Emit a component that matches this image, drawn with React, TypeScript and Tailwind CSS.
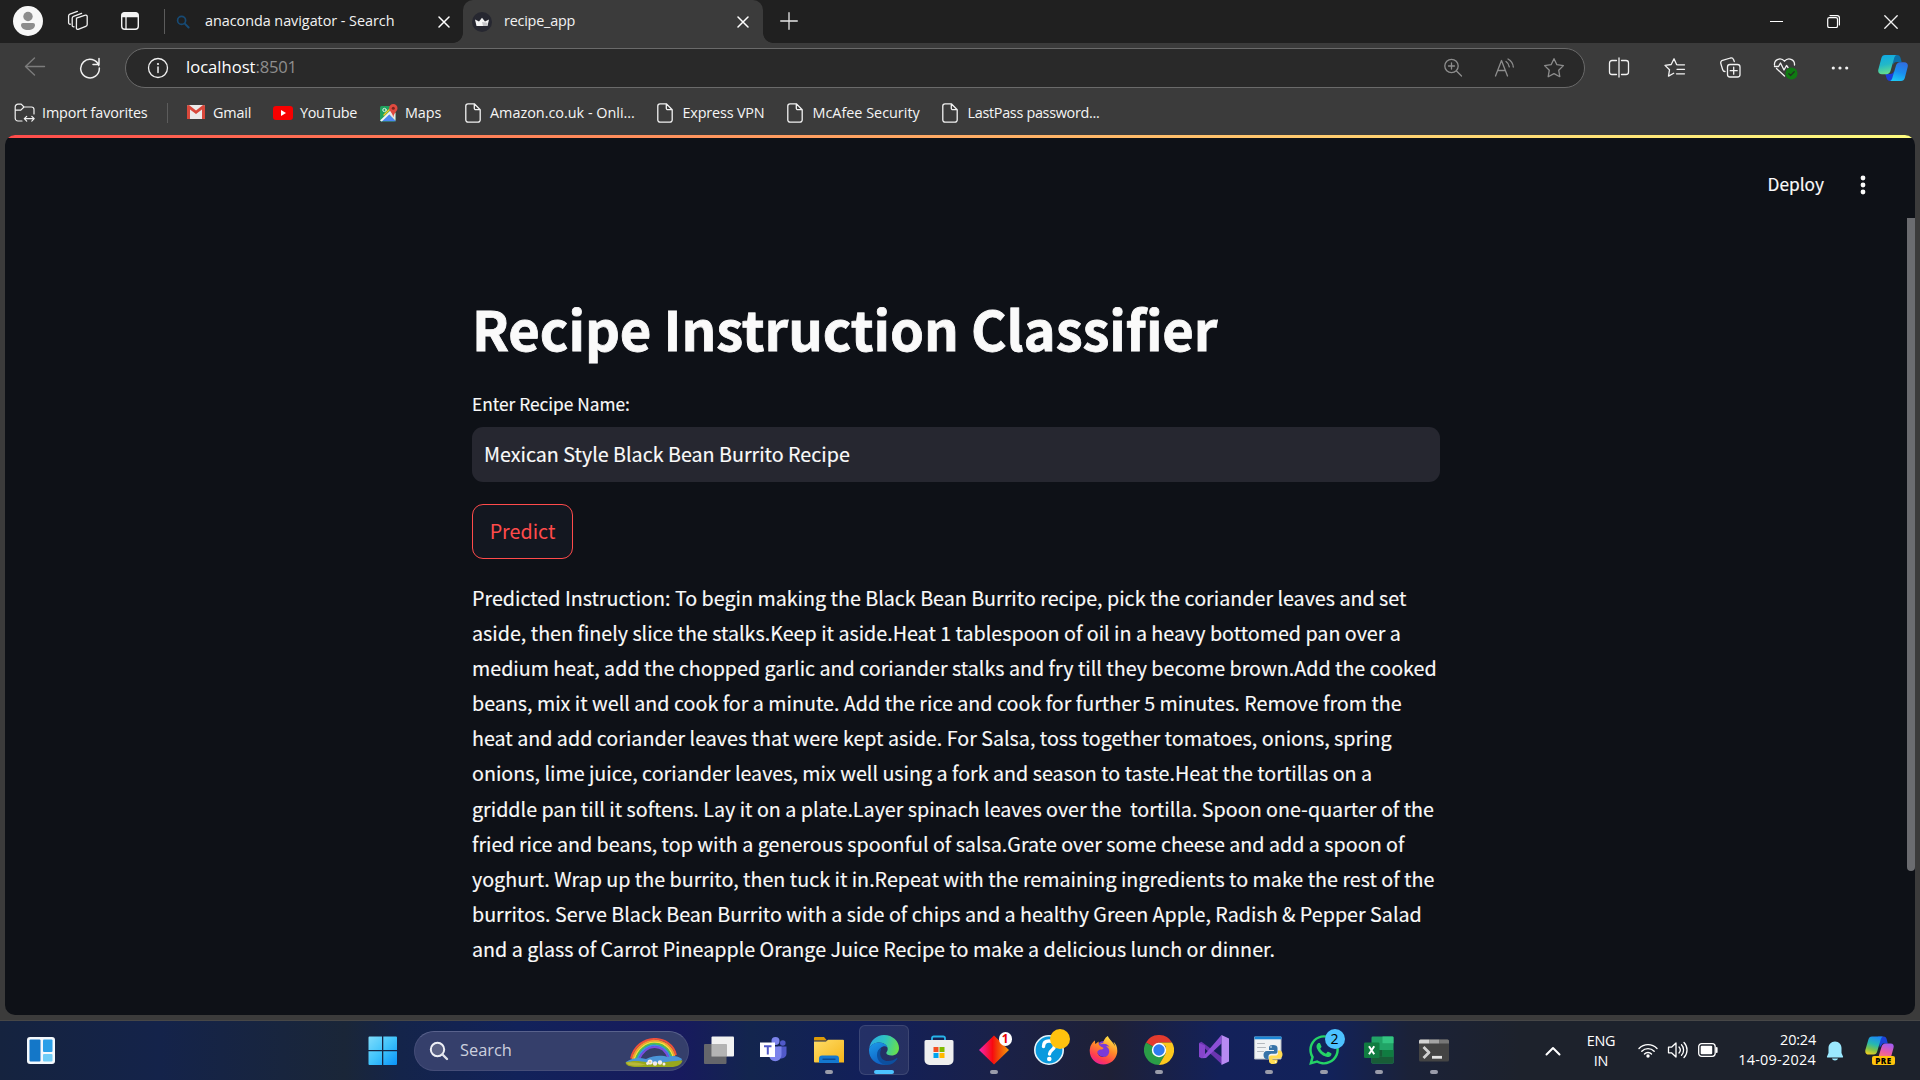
import React from "react";
import { FaWhatsapp, FaFirefoxBrowser } from "react-icons/fa";

const sans = "font-['Noto_Sans_CJK_SC',sans-serif]";
const ui = "font-['Open_Sans',sans-serif]";

type SvgProps = { w: number; h: number; className?: string; children: React.ReactNode };

function Svg({ w, h, className = "", children }: SvgProps) {
  return (
    <svg
      width={w}
      height={h}
      viewBox={`0 0 ${w} ${h}`}
      fill="none"
      strokeLinecap="round"
      strokeLinejoin="round"
      className={"block shrink-0 " + className}
    >
      {children}
    </svg>
  );
}

/* ---------- Tab strip ---------- */

function TabClose() {
  return (
    <Svg w={12} h={12}>
      <path d="M1 1l10 10M11 1L1 11" stroke="#fff" strokeWidth="1.5" />
    </Svg>
  );
}

function TabStrip() {
  return (
    <div className="flex h-[43px] bg-[#202020]">
      <div className="flex h-[42px] w-[164px] items-center">
        <Svg w={30} h={30} className="ml-[13px]">
          <circle cx="15" cy="15" r="15" fill="#f7f7f7" />
          <circle cx="15" cy="10.5" r="4.7" fill="#8c8c8c" />
          <path d="M8 19a2 2 0 0 1 2-2h10a2 2 0 0 1 2 2c0 3-3 5-7 5s-7-2-7-5z" fill="#8c8c8c" />
        </Svg>
        <Svg w={22} h={22} className="ml-6">
          <g stroke="#f0f0f0" strokeWidth="1.3">
            <path d="M9.5 8.2l8.8-3a1.4 1.4 0 0 1 1.9 1.3v7.9a2 2 0 0 1-1.4 1.9l-7.6 3a1.3 1.3 0 0 1-1.8-1.2z" />
            <path d="M7 16.8a1.4 1.4 0 0 1-1.8-1.3V8.2a2 2 0 0 1 1.3-1.9l8.1-3" />
            <path d="M3.4 14.2A1.4 1.4 0 0 1 1.6 13V6a2 2 0 0 1 1.3-1.9l7.5-2.7" />
          </g>
        </Svg>
        <Svg w={20} h={20} className="ml-[31px]">
          <rect x="1.7" y="1.7" width="16.6" height="16.6" rx="3" stroke="#f4f4f4" strokeWidth="1.4" />
          <path d="M1.7 6.2V4.5a3 3 0 0 1 3-3h10.6a3 3 0 0 1 3 3v1.7z" fill="#f4f4f4" />
          <path d="M6 6v12" stroke="#f4f4f4" strokeWidth="1.3" />
        </Svg>
      </div>
      <div className="mt-[9px] h-[25px] w-px bg-[#5c5c5c]" />
      <div className="flex h-[42px] w-[298px] items-center">
        <Svg w={14} h={14} className="ml-[11px] mt-[2px]">
          <circle cx="5.6" cy="5.4" r="4" stroke="#174a74" strokeWidth="1.7" />
          <path d="M8.8 8.6l3.8 3.9" stroke="#174a74" strokeWidth="2" />
        </Svg>
        <span className={"ml-[15px] w-[233px] whitespace-nowrap text-[14.4px] tracking-[-0.04px] text-[#f2f2f2] " + ui}>
          anaconda navigator - Search
        </span>
        <div className="mt-[1px]"><TabClose /></div>
      </div>
      <div className="relative flex h-[43px] w-[300px] items-center rounded-t-[10px] bg-[#3b3b3b] pb-px">
        <div className="absolute -left-[10px] bottom-0 size-[10px] bg-[radial-gradient(circle_at_0_0,#202020_9.5px,#3b3b3b_10.2px)]" />
        <div className="absolute -right-[10px] bottom-0 size-[10px] bg-[radial-gradient(circle_at_100%_0,#202020_9.5px,#3b3b3b_10.2px)]" />
        <Svg w={20} h={20} className="ml-[9px] mt-[2px]">
          <circle cx="10" cy="10" r="10" fill="#262730" />
          <path d="M3 7.5l4 2 3-3.7 3 3.7 4-2-1.5 6.6h-11z" fill="#f5f5f5" />
          <path d="M10 10l5.6 0.8-.6 3.3h-4z" fill="#c4c4c8" />
        </Svg>
        <span className={"ml-3 w-[233px] whitespace-nowrap text-[14.4px] tracking-[-0.22px] text-[#f2f2f2] " + ui}>
          recipe_app
        </span>
        <div className="mt-[1px]"><TabClose /></div>
      </div>
      <div className="flex h-[42px] items-center">
        <Svg w={18} h={18} className="ml-[17px]">
          <path d="M9 .7v16.6M.7 9h16.6" stroke="#e6e6e6" strokeWidth="1.3" />
        </Svg>
      </div>
      <div className="ml-auto mr-[22px] flex h-[43px] items-center gap-[44px]">
        <Svg w={13} h={13}><path d="M0 6.5h13" stroke="#fff" strokeWidth="1.2" /></Svg>
        <Svg w={13} h={13}>
          <rect x=".7" y="2.7" width="9.8" height="9.8" rx="1.6" stroke="#fff" strokeWidth="1.2" />
          <path d="M3 .6h7.2a2.2 2.2 0 0 1 2.2 2.2V10" stroke="#fff" strokeWidth="1.2" />
        </Svg>
        <Svg w={14} h={14}><path d="M.8.8l12.4 12.4M13.2.8L.8 13.2" stroke="#f2f2f2" strokeWidth="1.3" /></Svg>
      </div>
    </div>
  );
}

/* ---------- Address bar ---------- */

function CopilotIcon() {
  return (
    <Svg w={30} h={28}>
      <defs>
        <linearGradient id="cpA" x1="0" y1="0" x2="0.2" y2="1">
          <stop offset="0" stopColor="#0fa8e6" /><stop offset=".55" stopColor="#22b8c8" /><stop offset="1" stopColor="#62dc8e" />
        </linearGradient>
        <linearGradient id="cpB" x1="0.6" y1="0" x2="0.3" y2="1">
          <stop offset="0" stopColor="#2f6fe0" /><stop offset=".5" stopColor="#1a8df0" /><stop offset="1" stopColor="#1cc8f4" />
        </linearGradient>
      </defs>
      <path d="M13 1h6c2 0 3 1 3.600 3l1 4h-5c-2 0-3 1-3.600 3z" fill="#0b6fa8" />
      <path d="M16 27h-4c-2 0-3-1.200-3.600-3.200L7.300 20h5c2 0 3-1 3.600-3z" fill="#1b3fd8" />
      <path d="M7 1h11.500c-1.500.6-2 2-2.600 4l-3.400 12c-.6 2-2 3.200-4 3.200H4c-3 0-4.400-2-3.600-5L3.400 4C4 2 5 1 7 1z" fill="url(#cpA)" />
      <path d="M23 27H12c1.500-.6 2-2 2.600-4l3.400-11.500c.6-2 2-3.300 4-3.300h4.200c3 0 4.200 2 3.400 5L26.800 24c-.6 2-1.800 3-3.800 3z" fill="url(#cpB)" />
    </Svg>
  );
}

function Toolbar() {
  return (
    <div className="flex h-[50px] items-center bg-[#3b3b3b]">
      <Svg w={22} h={20} className="ml-[24px] -mt-[2px]">
        <path d="M20.500 9.500H1.500M10.500 1L1.500 9.500l9 8.500" stroke="#7c7c7c" strokeWidth="1.4" />
      </Svg>
      <Svg w={22} h={22} className="ml-[33px] -mt-[1px]">
        <path d="M19.800 8.500A9.300 9.300 0 1 0 20.300 11M20 1.500V7.500H14" stroke="#f0f0f0" strokeWidth="1.500" />
      </Svg>
      <div className="ml-[24px] flex h-[40px] w-[1460px] items-center rounded-full border border-[#6a6a6a] bg-[#292929]">
        <Svg w={22} h={22} className="ml-[20.500px]">
          <circle cx="11" cy="11" r="9.500" stroke="#f0f0f0" strokeWidth="1.300" />
          <path d="M11 10v5.500" stroke="#f0f0f0" strokeWidth="1.500" />
          <circle cx="11" cy="7" r="1.100" fill="#f0f0f0" />
        </Svg>
        <span className={"ml-[17.500px] whitespace-nowrap pb-px text-[16.6px] text-white " + ui}>localhost</span>
        <span className={"whitespace-nowrap pb-px text-[16.6px] tracking-[-0.2px] text-[#8e8e8e] " + ui}>:8501</span>
        <Svg w={20} h={20} className="ml-auto">
          <g stroke="#8d8d8d" strokeWidth="1.300">
            <circle cx="8.500" cy="8" r="6.700" /><path d="M13.500 13l5 5M8.500 5v6M5.500 8h6" />
          </g>
        </Svg>
        <Svg w={22} h={20} className="ml-[31px]">
          <g stroke="#8d8d8d" strokeWidth="1.300">
            <path d="M1.500 18L7.500 2.500 13.500 18M3.600 12.500h7.800" />
            <path d="M12 3.500c1.800 1.200 3 3 3.300 5.300M14 1c3.200 1.800 5 4.500 5.300 8" />
          </g>
        </Svg>
        <Svg w={22} h={22} className="ml-[27px] mr-[19px]">
          <path d="M11 1.700l2.900 6 6.500.9-4.700 4.600 1.100 6.500-5.800-3.100-5.800 3.100 1.100-6.500L1.600 8.600l6.500-.9z" stroke="#8d8d8d" strokeWidth="1.300" />
        </Svg>
      </div>
      <Svg w={22} h={22} className="ml-[23px]">
        <g stroke="#f2f2f2" strokeWidth="1.300">
          <path d="M8.500 3.500H4A2.500 2.500 0 0 0 1.500 6v9A2.500 2.500 0 0 0 4 17.500h4.500M13.500 3.500H18A2.500 2.500 0 0 1 20.500 6v9a2.500 2.500 0 0 1-2.500 2.500h-4.500M11 1v19" />
        </g>
      </Svg>
      <Svg w={22} h={22} className="ml-[34px]">
        <g stroke="#f2f2f2" strokeWidth="1.300">
          <path d="M14 7.800l-1.300-.1L10 1.800 7.200 7.500 1 8.400l4.500 4.400-1 6.300 5.200-2.800M14 7.800h6.500M13 12.300h7.500M12.500 16.800h8" />
        </g>
      </Svg>
      <Svg w={24} h={24} className="ml-[32.500px]">
        <g stroke="#f2f2f2" strokeWidth="1.300">
          <rect x="8.500" y="8.500" width="12.500" height="12.500" rx="2.500" />
          <path d="M14.700 11.200v7M11.200 14.700h7M6 15.500a2.500 2.500 0 0 1-2.300-1.800L1.800 7.500A2.500 2.500 0 0 1 3.500 4.400l8-2.400a2.500 2.500 0 0 1 3 1.600l.8 2" />
        </g>
      </Svg>
      <Svg w={26} h={24} className="ml-[30.500px]">
        <g stroke="#f2f2f2" strokeWidth="1.300">
          <path d="M1.500 9C1 3 8 1 11.500 5.200 15 1 22 3 21.500 9M3.500 12.500l8 7.500M1.500 10.500h4l2-3.500 3.500 7 2.500-4.500 1.500 2" />
        </g>
        <circle cx="18.500" cy="17.500" r="6" fill="#0f7a12" />
        <path d="M15.800 17.700l1.800 1.800 3.600-3.800" stroke="#20331f" strokeWidth="1.300" />
      </Svg>
      <Svg w={18} h={6} className="ml-[32px]">
        <circle cx="2.300" cy="3" r="1.600" fill="#f2f2f2" /><circle cx="9" cy="3" r="1.600" fill="#f2f2f2" /><circle cx="15.700" cy="3" r="1.600" fill="#f2f2f2" />
      </Svg>
      <div className="ml-[29px]"><CopilotIcon /></div>
    </div>
  );
}

/* ---------- Bookmarks ---------- */

function Doc() {
  return (
    <Svg w={16} h={20}>
      <path d="M3 .8h6.300l5.900 6V17a2.200 2.200 0 0 1-2.200 2.200H3A2.200 2.200 0 0 1 .8 17V3A2.200 2.200 0 0 1 3 .8zM9.300.8v4.400a1.500 1.500 0 0 0 1.500 1.500h4.400" stroke="#f2f2f2" strokeWidth="1.300" />
    </Svg>
  );
}

const mark = "flex shrink-0 items-center whitespace-nowrap text-[14.4px] text-[#f5f5f5] " + ui;

function Bookmarks() {
  return (
    <div className="flex h-[40px] items-center bg-[#3b3b3b] pl-[14px]">
      <div className={mark + " w-[153px] gap-[6px] tracking-[-0.14px]"}>
        <Svg w={22} h={20}>
          <path d="M8 18H4a2.800 2.800 0 0 1-2.800-2.800V4A2.800 2.800 0 0 1 4 1.200h3.200L10 4h7.500a2.500 2.500 0 0 1 2.500 2.500V11M1.300 7.200h5.500L10 4" stroke="#f2f2f2" strokeWidth="1.200" />
          <path d="M10.500 15.700h9.500M12.700 13.300l-2.400 2.400 2.400 2.400M17.800 13.300l2.400 2.400-2.400 2.400" stroke="#f2f2f2" strokeWidth="1.200" />
        </Svg>
        Import favorites
      </div>
      <div className="h-[20px] w-px bg-[#5c5c5c]" />
      <div className={mark + " ml-[19px] w-[86px] gap-[8px] tracking-[-0.15px]"}>
        <Svg w={18} h={15}>
          <rect x="0" y="0" width="18" height="14" rx="1.500" fill="#eceaea" />
          <path d="M0 14h3V4.500L9 9l6-4.500V14h3V1.500A1.500 1.500 0 0 0 16.500 0H16L9 5.500 2 0h-.5A1.500 1.500 0 0 0 0 1.500z" fill="#d9483b" />
        </Svg>
        Gmail
      </div>
      <div className={mark + " w-[106.500px] gap-[7px] tracking-[-0.3px]"}>
        <Svg w={20} h={14}>
          <rect width="20" height="14" rx="3" fill="#f80000" /><path d="M8 4v6l5-3z" fill="#fff" />
        </Svg>
        YouTube
      </div>
      <div className={mark + " w-[85.500px] gap-[7.500px] tracking-[-0.1px]"}>
        <Svg w={18} h={18}>
          <rect x="0" y="2" width="15.500" height="15.500" rx="1.500" fill="#1fa15d" />
          <path d="M1 17.300L9 10l7 7.300z" fill="#4b87f0" />
          <path d="M0 16.500L14 3l1.500 1.500L1.800 17.500z" fill="#f2f2f2" />
          <path d="M8.800 10l6.700 6.800V9l-2.500-2.500z" fill="#e8e8e8" />
          <path d="M10 5l-6 6" stroke="#fbc91c" strokeWidth="1.500" />
          <path d="M13.300 0a4.200 4.200 0 0 1 4.200 4.200c0 3-3.300 4-4.200 9-.9-5-4.200-6-4.200-9A4.200 4.200 0 0 1 13.300 0z" fill="#e04a3f" />
          <circle cx="13.300" cy="4.200" r="1.500" fill="#7c231f" />
          <circle cx="4.500" cy="6" r="1.700" stroke="#dff3e6" strokeWidth="1" />
        </Svg>
        Maps
      </div>
      <div className={mark + " w-[192px] gap-[9px]"}><Doc />Amazon.co.uk - Onli...</div>
      <div className={mark + " w-[130px] gap-[9.500px] tracking-[-0.17px]"}><Doc />Express VPN</div>
      <div className={mark + " w-[155px] gap-[9.500px]"}><Doc />McAfee Security</div>
      <div className={mark + " gap-[9.500px] tracking-[-0.3px]"}><Doc />LastPass password...</div>
    </div>
  );
}

/* ---------- Streamlit page ---------- */

const instruction = [
  "Predicted Instruction: To begin making the Black Bean Burrito recipe, pick the coriander leaves and set",
  "aside, then finely slice the stalks.Keep it aside.Heat 1 tablespoon of oil in a heavy bottomed pan over a",
  "medium heat, add the chopped garlic and coriander stalks and fry till they become brown.Add the cooked",
  "beans, mix it well and cook for a minute. Add the rice and cook for further 5 minutes. Remove from the",
  "heat and add coriander leaves that were kept aside. For Salsa, toss together tomatoes, onions, spring",
  "onions, lime juice, coriander leaves, mix well using a fork and season to taste.Heat the tortillas on a",
  "griddle pan till it softens. Lay it on a plate.Layer spinach leaves over the  tortilla. Spoon one-quarter of the",
  "fried rice and beans, top with a generous spoonful of salsa.Grate over some cheese and add a spoon of",
  "yoghurt. Wrap up the burrito, then tuck it in.Repeat with the remaining ingredients to make the rest of the",
  "burritos. Serve Black Bean Burrito with a side of chips and a healthy Green Apple, Radish & Pepper Salad",
  "and a glass of Carrot Pineapple Orange Juice Recipe to make a delicious lunch or dinner.",
];

function Page() {
  return (
    <div className={"relative mx-[5px] mt-[2px] h-[880px] overflow-hidden rounded-[10px] bg-[#0e1117] text-[#fafafa] " + sans}>
      <div className="h-[3px] bg-linear-to-r from-[#ff4b4b] to-[#fffd80]" />
      <div className="flex h-[91px] items-center justify-end pr-[49px]">
        <span className="mr-[36px] text-[17.3px] leading-6 [-webkit-text-stroke:0.15px_#fafafa]">Deploy</span>
        <Svg w={6} h={20} className="mt-[3px]">
          <circle cx="3" cy="3" r="2.400" fill="#fafafa" /><circle cx="3" cy="10" r="2.400" fill="#fafafa" /><circle cx="3" cy="17" r="2.400" fill="#fafafa" />
        </Svg>
      </div>
      <main className="ml-[467px] mt-[62px] w-[968px] [-webkit-text-stroke:0.15px_#fafafa]">
        <h1 className="h-[73px] whitespace-nowrap text-[54.4px] leading-[73px] font-bold tracking-[-0.09px] [font-variant-ligatures:common-ligatures] [-webkit-text-stroke:0.8px_#fafafa]">Recipe Instruction Classifier</h1>
        <label className="mt-[28px] block text-[17.3px] leading-6">Enter Recipe Name:</label>
        <div className="mt-[11px] flex h-[55px] items-center rounded-[11px] bg-[#262730] pb-[2px] pl-[12px] text-[19.7px] leading-[35px]">
          Mexican Style Black Bean Burrito Recipe
        </div>
        <button className="mt-[22px] flex h-[55px] w-[101px] items-center justify-center rounded-[11px] border border-[#ff4b4b] bg-[#131720] pb-[2px] text-[19.7px] leading-[35px] text-[#ff4b4b] [-webkit-text-stroke:0]">
          Predict
        </button>
        <div className="mt-[21px] text-[19.7px] leading-[35.1px] whitespace-pre">
          {instruction.map((line) => (
            <div key={line}>{line}</div>
          ))}
        </div>
      </main>
      <div className="absolute right-0 top-[83px] h-[653px] w-[8px] rounded-b-[4px] bg-[#6b6c70]" />
    </div>
  );
}

/* ---------- Taskbar ---------- */

type TaskProps = { children: React.ReactNode; running?: boolean; active?: boolean };

function Task({ children, running, active }: TaskProps) {
  return (
    <div className="flex h-[58px] w-[55px] items-center justify-center">
      <div
        className={
          "relative flex h-[50px] w-[50px] items-center justify-center rounded-[6px] " +
          (active ? "border border-white/10 bg-white/8" : "")
        }
      >
        {children}
        {running && <div className="absolute bottom-[1px] left-[21px] h-[4px] w-[8px] rounded-full bg-[#9a9caa]" />}
        {active && <div className="absolute bottom-0 left-[14px] h-[4px] w-[20px] rounded-full bg-[#4cc2ff]" />}
      </div>
    </div>
  );
}

function Rainbow() {
  return (
    <Svg w={58} h={30}>
      <g strokeWidth="1.900" strokeLinecap="butt">
        <path d="M6 20.500C12-5 46-5 51 17" stroke="#f0503c" />
        <path d="M7.700 21C14-3 44-3 49.500 18" stroke="#fb9a2a" />
        <path d="M9.200 21.500C16-1 43-1 48 19" stroke="#f7dc3c" />
        <path d="M10.800 21.500C17 1 41 1 46.500 19" stroke="#4fc04e" />
        <path d="M12.400 21.500C19 3 39.500 3 45 19.500" stroke="#3a8fe8" />
        <path d="M14 21.500C21 5 38 5 43.500 20" stroke="#7b4de0" />
      </g>
      <path d="M1 24c6-4 12-5 20-3 8-4 16-4 22-2 5-2 10-1 14 2-1 3-3 5-5 6H4c-2-1-3-2-3-3z" fill="#4a95d8" />
      <path d="M.5 24.500c7-2 13-2 22 0s24-2 35-2c-1 4-5 6.500-12 6.500H12C5 29 1 27.500.5 24.500z" fill="#98a81c" />
      <path d="M1 24.500c8-1 14 .5 20 2-6 1.500-12 1.500-17 .5z" fill="#b9b93a" />
      <g fill="#f3ecec"><circle cx="25" cy="24" r="2.600" /><circle cx="30" cy="25.500" r="2.200" /><circle cx="35" cy="24.500" r="2.200" /><circle cx="39" cy="26" r="1.500" /><circle cx="22.500" cy="25.500" r="1.400" /></g>
      <circle cx="25" cy="24" r=".8" fill="#e8c02a" />
    </Svg>
  );
}

function EdgeIcon() {
  return (
    <Svg w={30} h={30}>
      <defs>
        <linearGradient id="egA" x1="0" y1="0.3" x2="1" y2="0.5"><stop offset="0" stopColor="#2aa9e4" /><stop offset=".5" stopColor="#2fc5c0" /><stop offset="1" stopColor="#68e04c" /></linearGradient>
        <linearGradient id="egB" x1="0" y1="0" x2="0.4" y2="1"><stop offset="0" stopColor="#1c9bea" /><stop offset="1" stopColor="#0f63c4" /></linearGradient>
      </defs>
      <path d="M.3 13C1.500 5.500 7.500 0 15 0c9 0 15 6.500 15 13 0 5-3.500 7.500-7.500 7.500-3 0-5.200-1-5.200-2.500 0-1.200 1.400-1.600 1.400-4C18.700 10.500 15 7.500 10.500 7.500 5.500 7.500 1.800 10 .3 13z" fill="url(#egA)" />
      <path d="M.3 13C2 9.500 6 7.500 10.500 7.500c4 0 7.300 2.300 8 5.300-1-1.300-2.800-1.800-4.500-1.300-3 .8-4.500 3.500-4.500 7 0 5.500 4 10 9 11C9 31.500 0 25 0 15.500c0-1 .1-1.800.3-2.500z" fill="url(#egB)" />
      <path d="M12 14.500c-2.500 6 1 11.500 7 11.500 3.500 0 6.500-1.300 8.500-2.800.6-.4 1.200.1.800.8C26 27.800 21.500 30.300 17 30 11.500 29.500 8 24.500 8 20c0-3.500 1.500-6 4-7.300z" fill="#0d4f9e" />
    </Svg>
  );
}

function Taskbar() {
  return (
    <div className="relative flex h-[60px] items-center border-t border-[#474747] bg-[linear-gradient(90deg,#15233f_0px,#14234a_160px,#1a2638_345px,#14244a_400px,#12225a_520px,#171a5e_680px,#13254e_750px,#121f5a_870px,#1a2148_1000px,#1e2036_1110px,#13215a_1220px,#12225a_1330px,#1b2238_1410px,#1d222c_1520px,#1d222c_1920px)]">
      <Svg w={29} h={29} className="ml-[27px] -mt-[1px]">
        <rect x="0" y="1" width="28" height="27" rx="3" fill="#f4f8fc" />
        <rect x="2.500" y="3.500" width="11" height="22" rx="1" fill="#1477c8" />
        <rect x="16" y="3.500" width="9.500" height="12.500" rx="1" fill="#2a9fe8" />
        <rect x="16" y="18" width="9.500" height="7.500" rx="1" fill="#6fcdf8" />
      </Svg>
      <Svg w={30} h={30} className="ml-[312px]">
        <defs>
          <linearGradient id="win" x1="0" y1="0" x2="1" y2="1"><stop offset="0" stopColor="#7fdcfb" /><stop offset=".5" stopColor="#3fc3fb" /><stop offset="1" stopColor="#0a93f8" /></linearGradient>
        </defs>
        <path d="M1.500.5H14V14H.5V1.500a1 1 0 0 1 1-1zM15.300.5h12.700a1 1 0 0 1 1 1V14H15.300zM.5 15.300H14V29H1.500a1 1 0 0 1-1-1zM15.300 15.300H29V28a1 1 0 0 1-1 1H15.300z" fill="url(#win)" />
      </Svg>
      <div className="ml-[16px] flex h-[40px] w-[275px] items-center rounded-full border border-[#454d78] border-t-[#59628c] bg-[#353f6b]">
        <Svg w={20} h={20} className="ml-[14px]">
          <circle cx="8.500" cy="8.500" r="6.700" stroke="#eef0f6" strokeWidth="2" fill="#5a6184" /><path d="M13.500 13.500l4.500 4.500" stroke="#dfe2ea" strokeWidth="2.400" />
        </Svg>
        <span className={"ml-[11px] text-[16.4px] text-[#ccd0de] " + ui}>Search</span>
        <div className="ml-auto mr-[5px] mt-[4px]"><Rainbow /></div>
      </div>
      <div className="ml-[2px] flex self-start">
        <Task>
          <Svg w={30} h={28}>
            <rect x="7.500" y=".5" width="22.500" height="20" rx="1" fill="#f2f2f2" />
            <rect x="0" y="8" width="22.500" height="20" rx="1" fill="#6c6c6c" fillOpacity=".92" />
            <rect x="7.500" y="8" width="15" height="12.500" fill="#b4b4b4" />
          </Svg>
        </Task>
        <Task>
          <Svg w={28} h={26}>
            <circle cx="22.800" cy="6" r="2.800" fill="#5059c9" /><path d="M18 9.500h8.500v7a5 5 0 0 1-5 5H18z" fill="#5059c9" />
            <circle cx="15.500" cy="4" r="4" fill="#7b83eb" /><path d="M9 9.500h12.500v8.500a6.200 6.200 0 0 1-12.500 0z" fill="#7b83eb" />
            <rect x="0" y="5.500" width="15" height="14.500" fill="#fff" />
            <path d="M4 9.300h7.500M7.800 9.300v8.200" stroke="#5059c9" strokeWidth="2" strokeLinecap="butt" />
          </Svg>
        </Task>
        <Task running>
          <Svg w={30} h={28}>
            <defs><linearGradient id="fold" x1="0" y1="0" x2="1" y2="1"><stop offset="0" stopColor="#ffdc66" /><stop offset="1" stopColor="#f5b51a" /></linearGradient></defs>
            <path d="M0 2a1 1 0 0 1 1-1h9l3 3.500H0z" fill="#dc9a08" /><path d="M0 5.500h12L14 3.800h15a1 1 0 0 1 1 1V26.500H1a1 1 0 0 1-1-1z" fill="url(#fold)" />
            <path d="M5 27v-4.500a3 3 0 0 1 3-3h14a3 3 0 0 1 3 3V27z" fill="#1478d0" /><path d="M9 23.300h12" stroke="#0a4a94" strokeWidth="1.400" />
          </Svg>
        </Task>
        <Task active><EdgeIcon /></Task>
        <Task>
          <Svg w={30} h={30}>
            <path d="M8 6V3.200A1.700 1.700 0 0 1 9.700 1.500h9.600A1.700 1.700 0 0 1 21 3.200V6" stroke="#27b4ea" strokeWidth="1.800" />
            <path d="M.5 6.500a1.500 1.500 0 0 1 1.500-1.500h26a1.500 1.500 0 0 1 1.500 1.500V25a5 5 0 0 1-5 5h-19a5 5 0 0 1-5-5z" fill="#efefef" />
            <rect x="9.500" y="12" width="5" height="5" fill="#f25022" /><rect x="15.500" y="12" width="5" height="5" fill="#7fba00" /><rect x="9.500" y="18" width="5" height="5" fill="#00a4ef" /><rect x="15.500" y="18" width="5" height="5" fill="#ffb900" />
          </Svg>
        </Task>
        <Task running>
          <Svg w={30} h={30}>
            <defs><linearGradient id="dia" x1="0" y1="0" x2="1" y2="0"><stop offset="0" stopColor="#f326b4" /><stop offset=".45" stopColor="#f80a10" /><stop offset=".6" stopColor="#f03a08" /><stop offset="1" stopColor="#f89a0a" /></linearGradient></defs>
            <path d="M15 .5l15 14.500-15 14.500L0 15z" fill="url(#dia)" />
          </Svg>
          <div className="absolute left-[30px] top-[7px] flex size-[13.500px] items-center justify-center rounded-full bg-white text-[12px] leading-none font-bold text-[#e80000] font-['Open_Sans',sans-serif]">1</div>
        </Task>
        <Task>
          <Svg w={30} h={30}>
            <circle cx="15" cy="15" r="14.200" fill="#0a9ade" stroke="#e8f4fa" strokeWidth="1.600" />
            <path d="M9.500 11.500C9.500 7.500 12 6 15 6s5.500 1.800 5.500 5c0 4-5 4-5 8" stroke="#fff" strokeWidth="3.400" /><circle cx="15.300" cy="24" r="2.300" fill="#fff" />
          </Svg>
          <div className="absolute left-[26px] top-[4px] size-[20px] rounded-full bg-[#ffc20e]" />
        </Task>
        <Task>
          <svg width="0" height="0" className="absolute">
            <defs><linearGradient id="ffx" x1="0.8" y1="0" x2="0.3" y2="1"><stop offset="0" stopColor="#fff04a" /><stop offset=".45" stopColor="#ff8a28" /><stop offset=".8" stopColor="#ff3b52" /><stop offset="1" stopColor="#e8209a" /></linearGradient></defs>
          </svg>
          <div className="absolute left-[17px] top-[16px] size-[16px] rounded-full bg-[#7a3ad8]" />
          <FaFirefoxBrowser size={29} fill="url(#ffx)" className="relative" />
        </Task>
        <Task running>
          <Svg w={30} h={30}>
            <path d="M15 15L2 7.500A15 15 0 0 1 28 7.500L15 7.500z" fill="#e33b2e" />
            <path d="M2 7.500A15 15 0 0 0 15 30L21.500 18.700 15 15z" fill="#2a9d47" />
            <path d="M28 7.500A15 15 0 0 1 15 30l6.500-11.300L21.500 11 15 7.500z" fill="#fcc81e" />
            <circle cx="15" cy="15" r="7.200" fill="#fff" /><circle cx="15" cy="15" r="5.700" fill="#2f7cf0" />
          </Svg>
        </Task>
        <Task>
          <Svg w={30} h={30}>
            <path d="M0 8l2.500-1.300L23 22v7.500z" fill="#6a35b0" /><path d="M0 8v14l2.500 1.300L6 20V10.500z" fill="#8645cc" />
            <path d="M2.500 23.300L22.500 0v8.500L7 23z" fill="#8c4fd6" />
            <path d="M22.500 0L30 3.500v23L22.500 30z" fill="#b88af2" />
          </Svg>
        </Task>
        <Task running>
          <Svg w={30} h={28}>
            <rect x="1" y="1" width="26" height="22" fill="#f1f3f4" stroke="#b6bcc2" strokeWidth="1" /><rect x=".5" y=".5" width="27" height="2.800" fill="#1b86d6" />
            <path d="M3.500 7.500h7M3.500 11.500h8M3.500 15.500h6" stroke="#b4b9be" strokeWidth="1" />
            <path d="M19 9c-3 0-4 1-4 3v2h5v1h-7c-2.500 0-3.500 2-3.500 4s1 4 3 4h2v-2.500c0-1.800 1.200-2.800 3-2.800h4c1.200 0 2-.9 2-2V12c0-2-1.500-3-4.500-3z" fill="#3673a8" />
            <path d="M19.500 28c3 0 4-1 4-3v-1.500h-5v-1h6.500c2.500 0 3.500-1.800 3.500-4s-1-4-3-4h-1.500V17c0 1.800-1.200 2.600-3 2.600h-4c-1.200 0-2 .9-2 2V25c0 2 1.500 3 4.500 3z" fill="#ffdc52" />
            <circle cx="17" cy="11" r=".8" fill="#fff" /><circle cx="21.500" cy="26" r=".8" fill="#fff" />
          </Svg>
        </Task>
        <Task running>
          <FaWhatsapp size={34} color="#25d366" />
          <div className={"absolute left-[26px] top-[4px] flex size-[20px] items-center justify-center rounded-full bg-[#4cc2ff] text-[14px] leading-none text-black " + ui}>2</div>
        </Task>
        <Task running>
          <Svg w={30} h={28}>
            <rect x="7.500" y=".5" width="22" height="27" rx="1.200" fill="#21a366" />
            <path d="M18.500.5h10a1 1 0 0 1 1 1V7.300h-11z" fill="#33c481" /><rect x="18.500" y="14" width="11" height="6.800" fill="#107c41" /><rect x="7.500" y="14" width="11" height="6.800" fill="#185c37" />
            <path d="M7.500 20.800h22v5.500a1.200 1.200 0 0 1-1.200 1.200H8.700a1.200 1.200 0 0 1-1.200-1.200z" fill="#185c37" />
            <rect x="0" y="6.500" width="15.500" height="15.500" rx="1.200" fill="#107c41" />
            <path d="M5 10.300l5.200 8M10.200 10.300L5 18.300" stroke="#fff" strokeWidth="2" strokeLinecap="butt" />
          </Svg>
        </Task>
        <Task running>
          <Svg w={30} h={23}>
            <rect x="0" y=".5" width="30" height="22" rx="1.500" fill="#444" /><path d="M1.500.5h8.700v4H0V2A1.500 1.500 0 0 1 1.500.5z" fill="#d2d2d2" /><rect x="10.200" y=".5" width="10" height="4" fill="#a4a4a4" /><path d="M20.200.5h8.300A1.500 1.500 0 0 1 30 2v2.500h-9.800z" fill="#777" />
            <path d="M4.500 8l5.500 5.500-5.500 5.500" stroke="#d0d0d0" strokeWidth="2.800" strokeLinecap="butt" /><path d="M13 18.300h10" stroke="#e4e4e4" strokeWidth="2.800" strokeLinecap="butt" />
          </Svg>
        </Task>
      </div>
      <Svg w={16} h={10} className="ml-auto">
        <path d="M1.500 8.500L8 2l6.500 6.500" stroke="#fff" strokeWidth="2" />
      </Svg>
      <div className={"ml-[25px] w-[30px] text-center text-[14.4px] leading-[20px] tracking-[-0.3px] text-white " + ui}>
        ENG<br />IN
      </div>
      <Svg w={20} h={16} className="ml-[22px] -mt-[1px]">
        <g stroke="#fff" strokeWidth="1.400">
          <path d="M1 6.500a12.500 12.500 0 0 1 18 0M3.800 9.300a8.600 8.600 0 0 1 12.400 0M6.500 12a4.900 4.900 0 0 1 7 0" /></g>
        <circle cx="10" cy="14" r="1.700" fill="#fff" />
      </Svg>
      <Svg w={22} h={18} className="ml-[9px] -mt-[1px]">
        <g stroke="#fff" strokeWidth="1.300">
          <path d="M1.500 6.200h3L9 2v14l-4.500-4.200h-3zM12 6a4.500 4.500 0 0 1 0 6M14.500 3.800a7.500 7.500 0 0 1 0 10.400M17 1.500a10.800 10.800 0 0 1 0 15" />
        </g>
      </Svg>
      <Svg w={20} h={14} className="ml-[9px] -mt-[1px]">
        <rect x=".7" y=".7" width="16.500" height="12.600" rx="3" stroke="#fff" strokeWidth="1.300" /><rect x="2.700" y="2.700" width="11.500" height="8.600" rx="1" fill="#fff" /><path d="M18.700 5v4" stroke="#fff" strokeWidth="1.800" />
      </Svg>
      <div className={"ml-[16px] w-[82px] pb-[2px] text-right text-[14.4px] leading-[20px] text-white " + ui}>
        <div className="tracking-[-0.15px]">20:24</div>
        <div className="tracking-[0.27px]">14-09-2024</div>
      </div>
      <Svg w={18} h={20} className="ml-[10px]">
        <path d="M9 .5c4 0 6.500 3 6.500 6.500v5l1.500 3.500c.2.600 0 1-.7 1H1.700c-.7 0-.9-.4-.7-1L2.500 12V7C2.500 3.500 5 .5 9 .5zM6 17.500h6c-.3 1.300-1.500 2-3 2s-2.700-.7-3-2z" fill="#9be9ff" />
      </Svg>
      <div className="relative ml-[21px] mr-[25px] h-[29px] w-[30px]">
        <Svg w={30} h={29}>
          <defs>
            <linearGradient id="prA" x1="0.5" y1="0" x2="0.2" y2="1"><stop offset="0" stopColor="#1d8df0" /><stop offset=".4" stopColor="#26b8b0" /><stop offset=".7" stopColor="#7cc24a" /><stop offset="1" stopColor="#f4d020" /></linearGradient>
            <linearGradient id="prB" x1="0.6" y1="0" x2="0.3" y2="1"><stop offset="0" stopColor="#a45cf0" /><stop offset=".5" stopColor="#e85aa8" /><stop offset="1" stopColor="#ff8a5a" /></linearGradient>
          </defs>
          <path d="M13 .5h5.500c2 0 2.800 1 3.300 3l1 4h-5l-3 4z" fill="#1b44d8" />
          <path d="M7 .5h11c-1.500.6-2 2-2.600 4l-3.200 11c-.6 2-1.500 3-3.500 3H4c-3 0-4.300-2-3.500-5L3.400 3.500C4 1.500 5 .5 7 .5z" fill="url(#prA)" />
          <path d="M24 24H12.500l4-13c.6-2 2-3.500 4-3.500h5c2.700 0 3.800 1.800 3 4.500l-2.500 9z" fill="url(#prB)" />
        </Svg>
        <div className={"absolute left-[7px] top-[20px] flex h-[9px] w-[23px] items-center justify-center rounded-[2px] bg-[#ffc40c] text-[8px] leading-none font-extrabold tracking-[0.5px] text-black " + ui}>PRE</div>
      </div>
    </div>
  );
}

export default function App() {
  return (
    <div className="flex h-[1080px] w-[1920px] flex-col overflow-hidden bg-[#3b3b3b]">
      <TabStrip />
      <Toolbar />
      <Bookmarks />
      <Page />
      <div className="mt-auto">
        <Taskbar />
      </div>
    </div>
  );
}
